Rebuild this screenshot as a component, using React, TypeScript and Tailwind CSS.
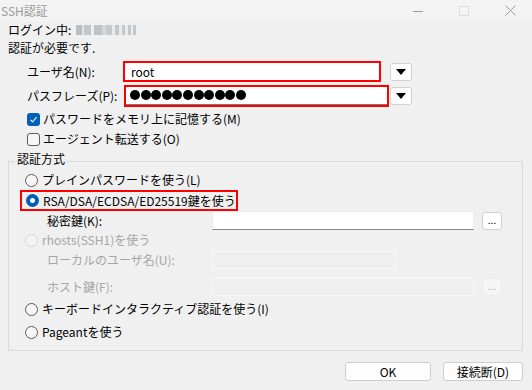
import React from 'react';

const font = { fontFamily: '"Noto Sans CJK JP", "Noto Sans", sans-serif' };

const Radio: React.FC<{ checked?: boolean; disabled?: boolean }> = ({ checked, disabled }) => {
  if (checked) {
    return (
      <span className="w-[13px] h-[13px] rounded-full bg-[#005fb8] flex items-center justify-center shrink-0">
        <span className="w-[5px] h-[5px] rounded-full bg-white" />
      </span>
    );
  }
  return (
    <span
      className={
        'w-[13px] h-[13px] rounded-full border shrink-0 ' +
        (disabled ? 'border-[#d4d4d4] bg-[#f3f3f3]' : 'border-[#5c5c5c] bg-[#f6f6f6]')
      }
    />
  );
};

const Checkbox: React.FC<{ checked?: boolean }> = ({ checked }) =>
  checked ? (
    <span className="w-[13px] h-[13px] rounded-[3px] bg-[#005fb8] flex items-center justify-center shrink-0">
      <svg width="9" height="9" viewBox="0 0 9 9" fill="none">
        <path d="M1.5 4.8 L3.6 6.8 L7.6 2.2" stroke="white" strokeWidth="1.1" />
      </svg>
    </span>
  ) : (
    <span className="w-[13px] h-[13px] rounded-[3px] border border-[#5c5c5c] bg-[#f6f6f6] shrink-0" />
  );

const DropButton = () => (
  <div className="w-[22px] h-[18px] bg-white border border-[#d0d0d0] rounded-[3px] flex items-center justify-center">
    <svg width="10" height="6" viewBox="0 0 10 6">
      <path d="M0 0 H10 L5 6 Z" fill="black" />
    </svg>
  </div>
);

const DotsButton: React.FC<{ disabled?: boolean }> = ({ disabled }) => (
  <div
    className={
      'w-[20px] h-[18px] rounded-[3px] border flex items-center justify-center text-[10px] leading-none pb-[2px] ' +
      (disabled ? 'border-[#ebebeb] bg-[#f5f5f5] text-[#b0b0b0]' : 'border-[#d0d0d0] bg-[#fdfdfd] text-black')
    }
  >
    ...
  </div>
);

const TextField: React.FC<{ width: string; height: string; disabled?: boolean }> = ({ width, height, disabled }) => (
  <div
    className={
      width + ' ' + height + ' border ' +
      (disabled ? 'border-[#f9f9f9] bg-[#efefef]' : 'bg-white border-[#ececec] border-b-[#868686]')
    }
  />
);

// pixelated (blurred) login name
const BlurredName = () => (
  <div className="flex items-center ml-[5px] h-[11px]">
    {[
      ['w-[6px]', 'bg-[#b9bec3]'],
      ['w-[2px]', 'bg-[#e3e5e7]'],
      ['w-[7px]', 'bg-[#c2c6ca]'],
      ['w-[3px]', 'bg-[#eceef0]'],
      ['w-[8px]', 'bg-[#bfc3c7]'],
      ['w-[4px]', 'bg-[#d6d9dc]'],
      ['w-[6px]', 'bg-[#c6cacd]'],
      ['w-[3px]', 'bg-[#e8eaec]'],
      ['w-[4px]', 'bg-[#c3c7cb]'],
      ['w-[3px]', 'bg-[#e8eaec]'],
      ['w-[3px]', 'bg-[#c3c7cb]'],
      ['w-[3px]', 'bg-[#e8eaec]'],
      ['w-[3px]', 'bg-[#c3c7cb]'],
      ['w-[2px]', 'bg-[#eceef0]'],
      ['w-[3px]', 'bg-[#c3c7cb]'],
    ].map(([w, c], i) => (
      <span key={i} className={'h-[10px] ' + w + ' ' + c} />
    ))}
  </div>
);

export default function App() {
  return (
    <div className="w-[532px] h-[390px] bg-[#f0f0f0] text-[12px] text-black overflow-hidden" style={font}>
      {/* Title bar */}
      <div className="h-[21px] bg-[#f3f3f3] flex items-center justify-between">
        <span className="pl-[1px] text-[#9a9a9a] leading-none">SSH認証</span>
        <div className="flex items-center h-full">
          <svg width="11" height="10" viewBox="0 0 11 10" className="mr-[35px]">
            <path d="M0 5.5 H10" stroke="#9a9a9a" strokeWidth="1" />
          </svg>
          <span className="w-[10px] h-[10px] border border-[#dcdcdc] rounded-[1px] mr-[36px]" />
          <svg width="11" height="11" viewBox="0 0 11 11" className="mr-[16px]">
            <path d="M0.5 0.5 L10.5 10.5 M10.5 0.5 L0.5 10.5" stroke="#9a9a9a" strokeWidth="1" />
          </svg>
        </div>
      </div>

      <div className="pl-[8px] pr-[9px]">
        <div className="h-[18px] flex items-center">
          <span>ログイン中:</span>
          <BlurredName />
        </div>
        <div className="h-[18px] flex items-center">認証が必要です.</div>

        {/* user name */}
        <div className="h-[21px] mt-[4px] flex items-center">
          <span className="pl-[19px] w-[115px]">ユーザ名(N):</span>
          <div className="w-[258px] h-[21px] border-2 border-[#ff0000] bg-white flex items-center pl-[6px]">
            root
          </div>
          <div className="ml-[9px]">
            <DropButton />
          </div>
        </div>

        {/* passphrase */}
        <div className="h-[21px] mt-[3px] flex items-center">
          <span className="pl-[19px] w-[116px]">パスフレーズ(P):</span>
          <div className="w-[265px] h-[22px] border-2 border-[#ff0000] bg-white">
            <div className="h-full border-b border-[#7a7a7a] flex items-center pl-[4px] gap-[0.6px]">
              {Array.from({ length: 11 }).map((_, i) => (
                <span key={i} className="w-[10px] h-[10px] rounded-full bg-black" />
              ))}
            </div>
          </div>
          <div className="ml-[1px]">
            <DropButton />
          </div>
        </div>

        <div className="h-[18px] mt-[4px] pl-[19px] flex items-center gap-[3px]">
          <Checkbox checked />
          <span>パスワードをメモリ上に記憶する(M)</span>
        </div>
        <div className="h-[18px] mt-[2px] pl-[19px] flex items-center gap-[3px]">
          <Checkbox />
          <span>エージェント転送する(O)</span>
        </div>

        {/* group */}
        <div className="relative mt-[13px] w-[515px] h-[190px] border border-[#dadada]">
          <span className="absolute left-[6px] top-[-10px] px-[2px] bg-[#f0f0f0] leading-[14px]">認証方式</span>

          <div className="h-[18px] mt-[9px] ml-[16px] flex items-center gap-[4px]">
            <Radio />
            <span>プレインパスワードを使う(L)</span>
          </div>

          <div className="w-[218px] h-[21px] mt-[1px] ml-[11px] border-2 border-[#ff0000] flex items-center pl-[4px] gap-[4px]">
            <Radio checked />
            <span>RSA/DSA/ECDSA/ED25519鍵を使う</span>
          </div>

          <div className="h-[19px] mt-[0px] flex items-center">
            <span className="pl-[38px] w-[203px]">秘密鍵(K):</span>
            <TextField width="w-[262px]" height="h-[19px]" />
            <div className="ml-[8px]">
              <DotsButton />
            </div>
          </div>

          <div className="h-[18px] mt-[1px] ml-[16px] flex items-center gap-[4px] text-[#a6a6a6]">
            <Radio disabled />
            <span>rhosts(SSH1)を使う</span>
          </div>

          <div className="h-[18px] mt-[2px] flex items-center text-[#a6a6a6]">
            <span className="pl-[38px] w-[203px]">ローカルのユーザ名(U):</span>
            <TextField width="w-[184px]" height="h-[18px]" disabled />
          </div>

          <div className="h-[18px] mt-[9px] flex items-center text-[#a6a6a6]">
            <span className="pl-[38px] w-[203px]">ホスト鍵(F):</span>
            <TextField width="w-[262px]" height="h-[18px]" disabled />
            <div className="ml-[8px]">
              <DotsButton disabled />
            </div>
          </div>

          <div className="h-[18px] mt-[4px] ml-[16px] flex items-center gap-[4px]">
            <Radio />
            <span>キーボードインタラクティブ認証を使う(I)</span>
          </div>

          <div className="h-[18px] mt-[5px] ml-[16px] flex items-center gap-[4px]">
            <Radio />
            <span>Pageantを使う</span>
          </div>
        </div>

        {/* buttons */}
        <div className="mt-[11px] flex justify-end gap-[12px]">
          <button className="w-[86px] h-[19px] bg-[#fdfdfd] border border-[#cfcfcf] rounded-[3px] flex items-center justify-center leading-none">
            OK
          </button>
          <button className="w-[80px] h-[19px] bg-[#fdfdfd] border border-[#cfcfcf] rounded-[3px] flex items-center justify-center leading-none">
            接続断(D)
          </button>
        </div>
      </div>
    </div>
  );
}
